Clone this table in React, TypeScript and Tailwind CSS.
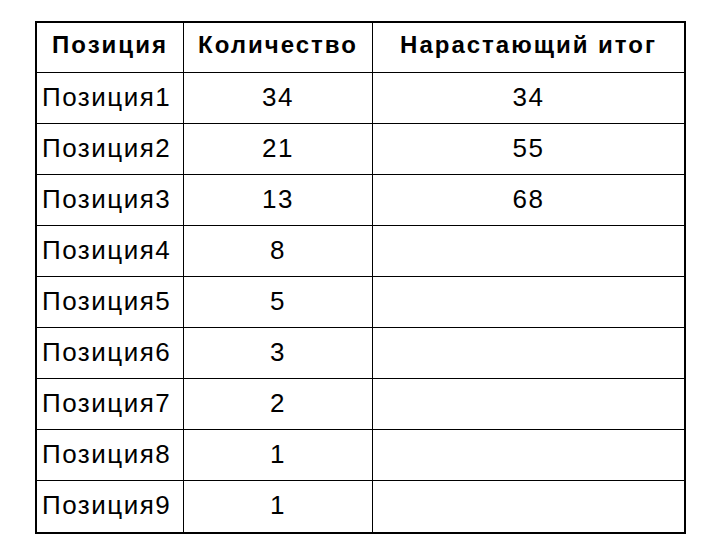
import React from 'react'

const rows: [string, string, string][] = [
  ['Позиция1', '34', '34'],
  ['Позиция2', '21', '55'],
  ['Позиция3', '13', '68'],
  ['Позиция4', '8', ''],
  ['Позиция5', '5', ''],
  ['Позиция6', '3', ''],
  ['Позиция7', '2', ''],
  ['Позиция8', '1', ''],
  ['Позиция9', '1', ''],
]

export default function App() {
  return (
    <div
      className="h-[540px] w-[720px] bg-white pl-[35px] pt-[21px] text-black"
      style={{ fontFamily: '"Liberation Sans", Arial, sans-serif' }}
    >
      <div className="w-[651px] border-2 border-black">
        <div className="grid h-[50px] grid-cols-[147px_189px_311px] border-b border-black text-[24px] font-bold tracking-[2px]">
          <div className="flex items-center justify-center border-r border-black pb-[5px]">Позиция</div>
          <div className="flex items-center justify-center border-r border-black pb-[5px]">Количество</div>
          <div className="flex items-center justify-center pb-[5px]">Нарастающий итог</div>
        </div>
        {rows.map(([name, qty, total], i) => (
          <div
            key={name}
            className={`grid h-[51px] grid-cols-[147px_189px_311px] text-[26px] tracking-[1.5px] ${
              i < rows.length - 1 ? 'border-b border-black' : ''
            }`}
          >
            <div className="flex items-center border-r border-black pl-[5px] pb-[2px]">{name}</div>
            <div className="flex items-center justify-center border-r border-black pb-[2px]">{qty}</div>
            <div className="flex items-center justify-center pb-[2px]">{total}</div>
          </div>
        ))}
      </div>
    </div>
  )
}
